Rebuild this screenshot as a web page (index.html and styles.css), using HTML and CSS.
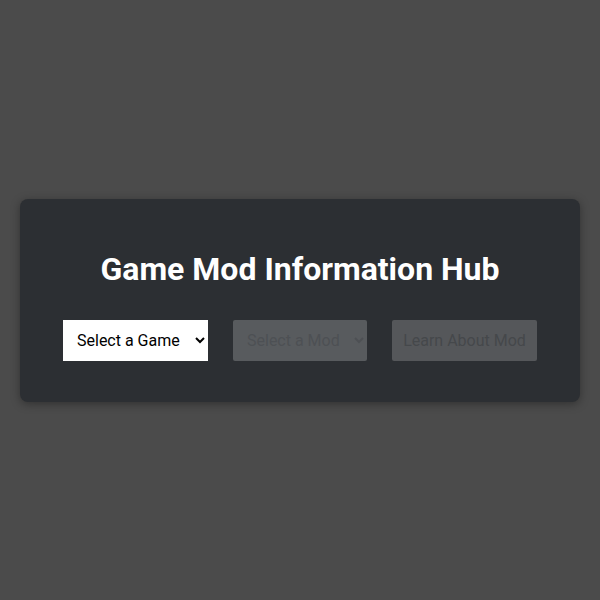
FILE: index.html
```html
<!DOCTYPE html>
<html lang="en">
<head>
<meta charset="utf-8">
<title>Game Mod Information Hub</title>
<link rel="stylesheet" href="styles.css">
</head>
<body>
<main class="page">
  <section class="card">
    <h1 class="title">Game Mod Information Hub</h1>
    <div class="controls">
      <select class="control select-game">
        <option>Select a Game</option>
      </select>
      <select class="control select-mod" disabled>
        <option>Select a Mod</option>
      </select>
      <button class="control learn-btn" disabled>Learn About Mod</button>
    </div>
  </section>
</main>
</body>
</html>
```
FILE: styles.css
```css
html, body {
  margin: 0;
  padding: 0;
  height: 100%;
}
body {
  background: #4b4b4b;
  font-family: Roboto, "Liberation Sans", sans-serif;
  color: #ffffff;
}
.page {
  display: flex;
  align-items: center;
  justify-content: center;
  height: 600px;
  padding: 0 20px;
  box-sizing: border-box;
}
.card {
  width: 560px;
  box-sizing: border-box;
  background: #2c2f33;
  border-radius: 8px;
  box-shadow: 0 2px 10px rgba(0, 0, 0, 0.35);
  padding: 52px 40px 41px;
  display: flex;
  flex-direction: column;
  align-items: center;
}
.title {
  margin: 0 0 32px;
  font-size: 32px;
  font-weight: 700;
  line-height: 37px;
  text-align: center;
}
.controls {
  display: flex;
  gap: 25px;
  justify-content: center;
}
.control {
  font-family: Roboto, "Liberation Sans", sans-serif;
  font-size: 16px;
  height: 41px;
  box-sizing: border-box;
  border: none;
  border-radius: 2px;
  padding: 0 10px;
}
.select-game {
  width: 145px;
  background: #ffffff;
  color: #000000;
  border-radius: 0;
}
.select-mod {
  width: 134px;
  background: #6b6e71;
  color: #5c5f62;
}
.learn-btn {
  width: 145px;
  background: #55575a;
  color: #45484b;
}
```
